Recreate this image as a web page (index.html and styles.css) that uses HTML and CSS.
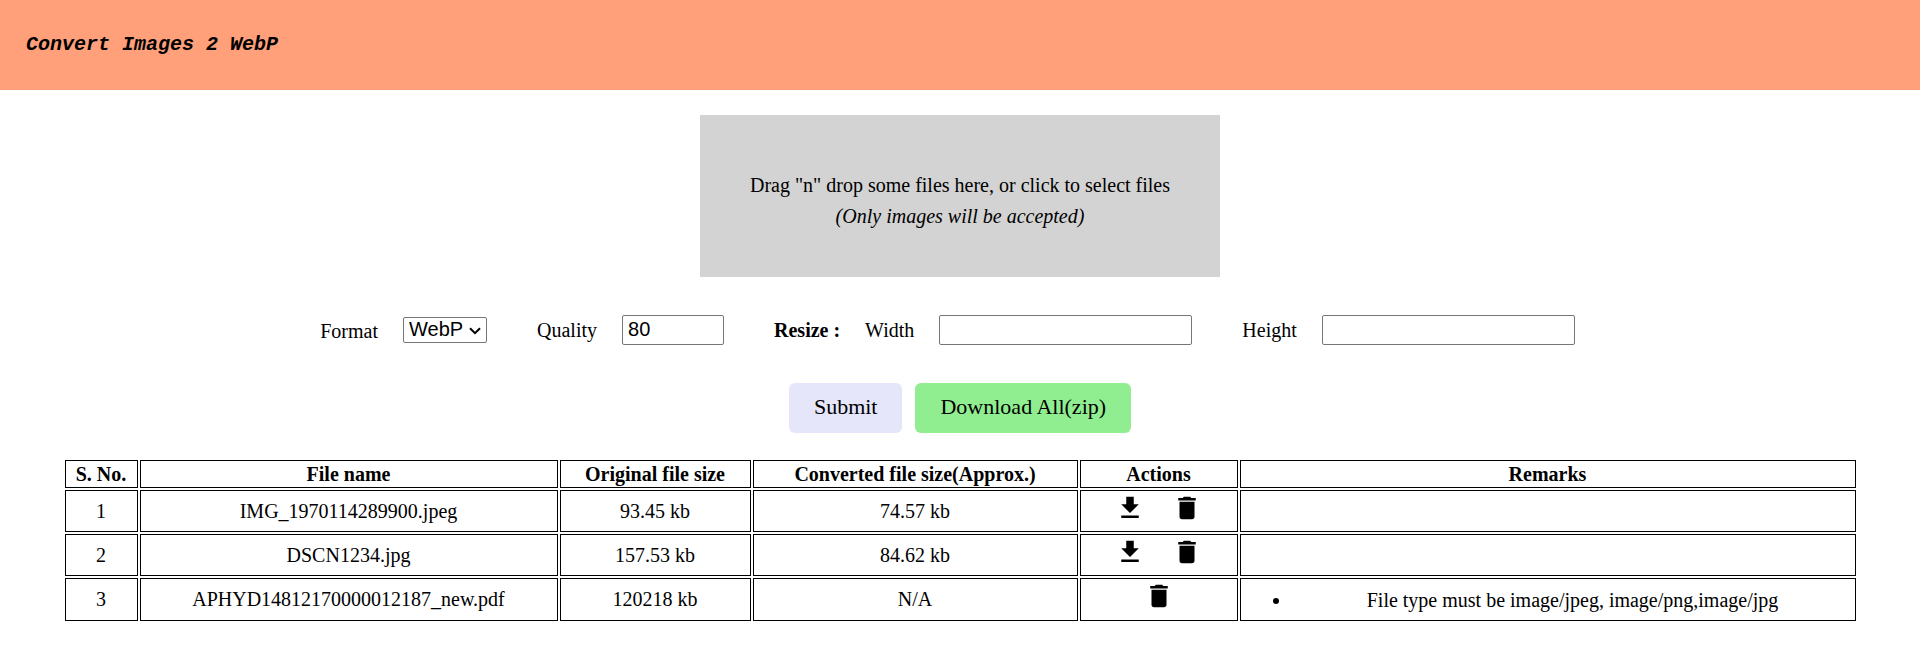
FILE: index.html
```html
<!DOCTYPE html>
<html lang="en">
<head>
<meta charset="utf-8">
<title>Convert Images 2 WebP</title>
<link rel="stylesheet" href="styles.css">
</head>
<body>
<svg class="sprite" aria-hidden="true">
  <symbol id="download" viewBox="0 0 24 24"><path d="M5 20h14v-2H5v2zM19 9h-4V3H9v6H5l7 7 7-7z"/></symbol>
  <symbol id="trash" viewBox="0 0 24 24"><path d="M6 19c0 1.1.9 2 2 2h8c1.1 0 2-.9 2-2V7H6v12zM19 4h-3.5l-1-1h-5l-1 1H5v2h14V4z"/></symbol>
</svg>
<header class="header"><h1 class="title">Convert Images 2 WebP</h1></header>
<main class="main">
  <section class="dropzone">
    <div>Drag "n" drop some files here, or click to select files</div>
    <em>(Only images will be accepted)</em>
  </section>
  <form class="options">
    <div class="field"><label for="format" class="format-label">Format</label><div class="select-wrap"><select id="format" class="select"><option>WebP</option></select><svg class="chevron" viewBox="0 0 12 8"><path d="M1 1.2l5 5 5-5"/></svg></div></div>
    <div class="field"><label for="quality">Quality</label><input id="quality" class="input quality" value="80"></div>
    <div class="field resize"><b>Resize :</b><label for="width">Width</label><input id="width" class="input"></div>
    <div class="field"><label for="height">Height</label><input id="height" class="input"></div>
  </form>
  <div class="buttons">
    <button class="button submit">Submit</button>
    <button class="button download-all">Download All(zip)</button>
  </div>
  <table class="files">
    <colgroup><col class="c-no"><col class="c-name"><col class="c-orig"><col class="c-conv"><col class="c-act"><col class="c-rem"></colgroup>
    <thead>
      <tr class="head"><th>S. No.</th><th>File name</th><th>Original file size</th><th>Converted file size(Approx.)</th><th>Actions</th><th>Remarks</th></tr>
    </thead>
    <tbody>
      <tr class="row"><td>1</td><td>IMG_1970114289900.jpeg</td><td>93.45 kb</td><td>74.57 kb</td><td class="actions"><div class="icons"><svg class="icon"><use href="#download"/></svg><svg class="icon"><use href="#trash"/></svg></div></td><td></td></tr>
      <tr class="row"><td>2</td><td>DSCN1234.jpg</td><td>157.53 kb</td><td>84.62 kb</td><td class="actions"><div class="icons"><svg class="icon"><use href="#download"/></svg><svg class="icon"><use href="#trash"/></svg></div></td><td></td></tr>
      <tr class="row last"><td>3</td><td>APHYD14812170000012187_new.pdf</td><td>120218 kb</td><td>N/A</td><td class="actions"><div class="icons"><svg class="icon"><use href="#trash"/></svg></div></td><td><ul class="remarks"><li>File type must be image/jpeg, image/png,image/jpg</li></ul></td></tr>
    </tbody>
  </table>
</main>
</body>
</html>
```
FILE: styles.css
```css
* { box-sizing: border-box; }
body { margin: 0; background: #fff; color: #000; font: 20px/23px "Liberation Serif", "Times New Roman", serif; }
.sprite { display: none; }
.header { display: flex; align-items: center; height: 90px; padding: 0 25px 2px 26px; background: #ffa07a; }
.title { margin: 0; font: italic bold 20px/23px "Liberation Mono", "Courier New", monospace; }
.main { display: flex; flex-direction: column; align-items: center; padding-top: 25px; }
.dropzone { width: 520px; height: 162px; padding: 55px 0 45px; background: #d3d3d3; text-align: center; line-height: 31px; }
.options { display: flex; gap: 50px; margin: 38px 25px 0 0; height: 30px; }
.field { display: flex; align-items: center; gap: 25px; }
.format-label { padding-top: 2px; }
.select-wrap { position: relative; height: 26px; }
.select { display: block; appearance: none; height: 26px; width: 84px; padding: 0 5px 2px; border: 1px solid #767676; border-radius: 2px; background: #fff; color: #000; font: 20px "Liberation Sans", Arial, sans-serif; }
.chevron { position: absolute; right: 6px; top: 10px; width: 12px; height: 8px; fill: none; stroke: #000; stroke-width: 2; pointer-events: none; }
.input { width: 253px; height: 30px; padding: 0 5px 2px; border: 1px solid #767676; border-radius: 2px; background: #fff; color: #000; font: 20px "Liberation Sans", Arial, sans-serif; }
.quality { width: 102px; }
.buttons { display: flex; gap: 13px; margin-top: 38px; }
.button { height: 50px; padding: 0 25px 2px; border: 0; border-radius: 6px; color: #000; font: 22px "Liberation Serif", "Times New Roman", serif; }
.submit { background: #e6e6fa; }
.download-all { background: #90ee90; }
.files { width: 1795px; margin-top: 25px; table-layout: fixed; border-collapse: separate; border-spacing: 2px; text-align: center; }
.c-no { width: 73px; }
.c-name { width: 418px; }
.c-orig { width: 191px; }
.c-conv { width: 325px; }
.c-act { width: 158px; }
.c-rem { width: 616px; }
.files th, .files td { padding: 1px; border: 1px solid #000; }
.head { height: 28px; }
.row { height: 42px; }
.last { height: 43px; }
.files .actions { padding-top: 2px; vertical-align: top; }
.icons { display: flex; justify-content: center; gap: 27px; }
.icon { width: 30px; height: 30px; }
.remarks { margin: 0; padding: 1px 0 0 50px; }
```
